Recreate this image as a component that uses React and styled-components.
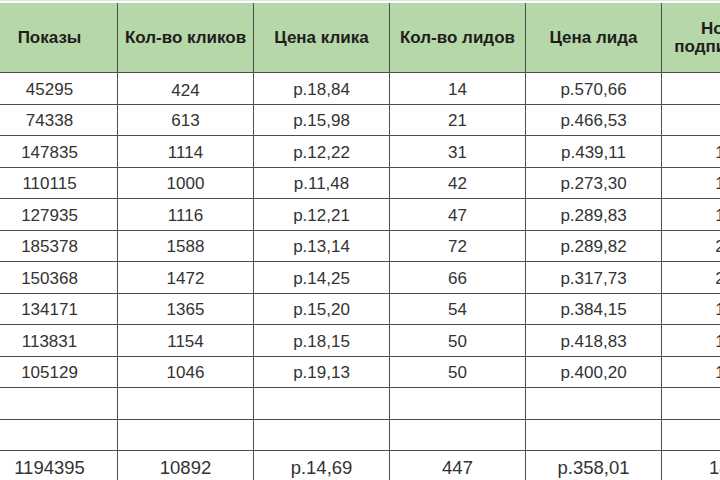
import styled, { createGlobalStyle } from "styled-components";

const GlobalStyle = createGlobalStyle`
  html, body {
    margin: 0;
    padding: 0;
    background: #ffffff;
    overflow: hidden;
  }
  body {
    font-family: "Liberation Sans", Arial, sans-serif;
  }
`;

const headers = [
  "Показы",
  "Кол-во кликов",
  "Цена клика",
  "Кол-во лидов",
  "Цена лида",
  "Новых подписчиков",
];

const rows = [
  ["45295", "424", "р.18,84", "14", "р.570,66", "58"],
  ["74338", "613", "р.15,98", "21", "р.466,53", "87"],
  ["147835", "1114", "р.12,22", "31", "р.439,11", "143"],
  ["110115", "1000", "р.11,48", "42", "р.273,30", "151"],
  ["127935", "1116", "р.12,21", "47", "р.289,83", "176"],
  ["185378", "1588", "р.13,14", "72", "р.289,82", "214"],
  ["150368", "1472", "р.14,25", "66", "р.317,73", "208"],
  ["134171", "1365", "р.15,20", "54", "р.384,15", "167"],
  ["113831", "1154", "р.18,15", "50", "р.418,83", "139"],
  ["105129", "1046", "р.19,13", "50", "р.400,20", "132"],
  ["", "", "", "", "", ""],
  ["", "", "", "", "", ""],
];

const totals = ["1194395", "10892", "р.14,69", "447", "р.358,01", "1475"];

const Page = styled.div`
  padding-top: 2px;
  border-top: 1px solid #e4e4e4;
`;

const Sheet = styled.div`
  display: grid;
  grid-template-columns: repeat(6, 135px);
  grid-template-rows: 69px repeat(12, 30.5px) 31px;
  gap: 1px;
  padding: 0 1px 1px 1px;
  margin-left: -19px;
  width: max-content;
  background: #4e4e4e;
`;

const HeadCell = styled.div`
  display: flex;
  align-items: center;
  justify-content: center;
  text-align: center;
  background: #b6d7a8;
  color: #1e1e1e;
  font-weight: bold;
  font-size: 17px;
  line-height: 18px;
  padding: 0 6px;
`;

const Cell = styled.div`
  display: flex;
  align-items: ${(p) => (p.$low ? "flex-end" : "center")};
  justify-content: center;
  background: #ffffff;
  color: #333333;
  font-size: ${(p) => (p.$total ? "18.5px" : "17px")};
  padding-top: ${(p) => (p.$low ? "0" : "3px")};
  padding-bottom: ${(p) => (p.$low ? "3px" : "0")};
  white-space: nowrap;
`;

export default function App() {
  return (
    <>
      <GlobalStyle />
      <Page>
        <Sheet>
          {headers.map((h) => (
            <HeadCell key={h}>
              {h === "Новых подписчиков" ? (
                <span>
                  Новых
                  <br />
                  подписчиков
                </span>
              ) : (
                h
              )}
            </HeadCell>
          ))}
          {rows.map((row, i) =>
            row.map((v, j) => (
              <Cell key={`${i}-${j}`} $low={i === 0 && j === 1}>
                {v}
              </Cell>
            ))
          )}
          {totals.map((v, j) => (
            <Cell key={`t-${j}`} $total>
              {v}
            </Cell>
          ))}
        </Sheet>
      </Page>
    </>
  );
}
